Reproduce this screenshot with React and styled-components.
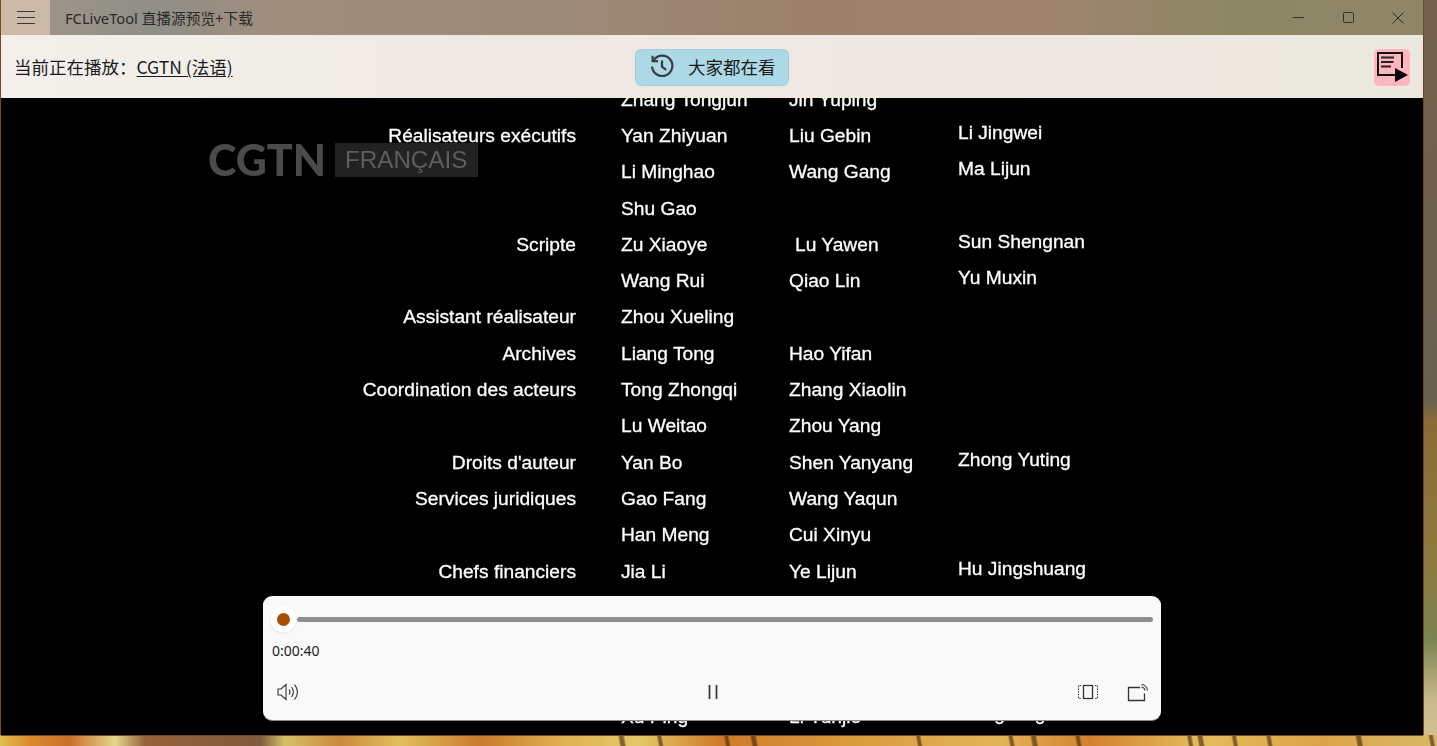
import * as React from 'react';
import styled, { createGlobalStyle } from 'styled-components';

const credits = [
    { names: ['Zhang Tongjun', 'Jin Yuping'] },
    { role: 'Réalisateurs exécutifs', names: ['Yan Zhiyuan', 'Liu Gebin', 'Li Jingwei'] },
    { names: ['Li Minghao', 'Wang Gang', 'Ma Lijun'] },
    { names: ['Shu Gao'] },
    { role: 'Scripte', names: ['Zu Xiaoye', 'Lu Yawen', 'Sun Shengnan'], indent: true },
    { names: ['Wang Rui', 'Qiao Lin', 'Yu Muxin'] },
    { role: 'Assistant réalisateur', names: ['Zhou Xueling'] },
    { role: 'Archives', names: ['Liang Tong', 'Hao Yifan'] },
    { role: 'Coordination des acteurs', names: ['Tong Zhongqi', 'Zhang Xiaolin'] },
    { names: ['Lu Weitao', 'Zhou Yang'] },
    { role: "Droits d'auteur", names: ['Yan Bo', 'Shen Yanyang', 'Zhong Yuting'] },
    { role: 'Services juridiques', names: ['Gao Fang', 'Wang Yaqun'] },
    { names: ['Han Meng', 'Cui Xinyu'] },
    { role: 'Chefs financiers', names: ['Jia Li', 'Ye Lijun', 'Hu Jingshuang'] },
    { names: [] },
    { names: [] },
    { names: [] },
    { names: ['Xu Ping', 'Li Yunjie', 'Geng Jing'] },
];

const HistoryIcon = () => (
    <svg width="26" height="26" viewBox="0 0 26 26" fill="none" stroke="#383d42" strokeWidth="2.2">
        <path d="M4.6 7.2A10.2 10.2 0 1 1 3 13.6" />
        <path d="M3.6 2.8v5.4h5.4" />
        <path d="M13 7.4v6.2l4.2 3.2" />
    </svg>
);

const PlaylistIcon = () => (
    <svg width="36" height="37" viewBox="0 0 36 37">
        <path d="M22 26H4V4h24v15" fill="none" stroke="#111" strokeWidth="2" />
        <path d="M7 8.5h13M7 13h12.500M7 17.500h10" fill="none" stroke="#222" strokeWidth="2" />
        <path d="M21 19l13 7-13 7z" fill="#000" />
    </svg>
);

const SpeakerIcon = () => (
    <svg width="22" height="20" viewBox="0 0 22 20" fill="none" stroke="#333" strokeWidth="1.1">
        <path d="M1 7h3l5-4.500v15L4 13H1z" />
        <path d="M12 7.500a4 4 0 0 1 0 5" />
        <path d="M14.500 5a7.500 7.500 0 0 1 0 10" />
        <path d="M17.500 2.500a11 11 0 0 1 0 15" />
    </svg>
);

const PauseIcon = () => (
    <svg width="12" height="16" viewBox="0 0 12 16" stroke="#333" strokeWidth="1.7">
        <path d="M2.500 1v14M9.500 1v14" />
    </svg>
);

const FitIcon = () => (
    <svg width="22" height="16" viewBox="0 0 22 16" fill="none" stroke="#333">
        <rect x="6.500" y="1.500" width="9" height="13" strokeWidth="1.300" />
        <path d="M4 1.500H1.500v13H4M18 1.500h2.500v13H18" strokeWidth="1" strokeDasharray="1.500 1.200" />
    </svg>
);

const CastIcon = () => (
    <svg width="22" height="19" viewBox="0 0 22 19" fill="none" stroke="#333">
        <path d="M13 4.500H1.500v13h16v-7" strokeWidth="1.300" />
        <path d="M14.500 4a4 4 0 0 1 3.500 3.500M14.500 1.500a6.500 6.500 0 0 1 6 6" strokeWidth="1.100" />
    </svg>
);

const App = () => {
    return (<Wallpaper>
        <GlobalStyle />
        <AppWindow>
            <TitleBar>
                <MenuButton><span /><span /><span /></MenuButton>
                <AppTitle>FCLiveTool 直播源预览+下载</AppTitle>
                <WindowButtons>
                    <WindowButton><MinimizeGlyph /></WindowButton>
                    <WindowButton><MaximizeGlyph /></WindowButton>
                    <WindowButton>
                        <svg width="12" height="12" viewBox="0 0 12 12" stroke="#2e2a22" strokeWidth="1">
                            <path d="M.5.5l11 11M11.500.5l-11 11" />
                        </svg>
                    </WindowButton>
                </WindowButtons>
            </TitleBar>
            <Header>
                <NowPlaying>当前正在播放：<ChannelLink>CGTN (法语)</ChannelLink></NowPlaying>
                <PopularButton><HistoryIcon />大家都在看</PopularButton>
                <PlaylistButton><PlaylistIcon /></PlaylistButton>
            </Header>
            <Video>
                <CreditList>
                    {credits.map((row, i) => (
                        <CreditRow key={i}>
                            <Role>{row.role}</Role>
                            <Name>{row.names[0]}</Name>
                            <Name $indent={row.indent}>{row.names[1]}</Name>
                            <Name $raised>{row.names[2]}</Name>
                        </CreditRow>
                    ))}
                </CreditList>
                <Watermark>
                    <WatermarkBrand>CGTN</WatermarkBrand>
                    <WatermarkTag>FRANÇAIS</WatermarkTag>
                </Watermark>
                <Player>
                    <SliderRow>
                        <Thumb />
                        <Track />
                    </SliderRow>
                    <Timer>0:00:40</Timer>
                    <Controls>
                        <ControlButton><SpeakerIcon /></ControlButton>
                        <ControlButton><PauseIcon /></ControlButton>
                        <RightControls>
                            <ControlButton><FitIcon /></ControlButton>
                            <ControlButton><CastIcon /></ControlButton>
                        </RightControls>
                    </Controls>
                </Player>
            </Video>
        </AppWindow>
    </Wallpaper>);
}

export default App;

const GlobalStyle = createGlobalStyle`
    html, body { margin: 0; padding: 0; height: 100%; overflow: hidden; }
    #root { height: 100%; }
`;

const twig = (x, w, c = 'rgba(70,38,12,.62)') => `transparent ${x - 2}px, ${c} ${x}px, ${c} ${x + w}px, transparent ${x + w + 2}px`;

const Wallpaper = styled.div`
    height: 746px;
    width: 1437px;
    overflow: hidden;
    background-color: #6a5c4a;
    background-image:
        linear-gradient(80deg, ${[612, 650, 716, 742, 905, 996, 1018, 1062, 1172, 1182, 1216, 1250, 1338, 1410].map((x, i) => twig(x, i % 3 === 0 ? 3 : 2)).join(', ')}, transparent 1437px),
        linear-gradient(90deg, #e0c050 0, #d98a2c 30px, #c9702a 70px, #e6d68c 115px, #96623a 145px, #7f5a3c 260px, #d6c06a 285px, #c98a3a 340px, #e2c060 400px, #c87a2c 480px, #e0b050 560px, #e4c868 640px, #cf7a28 720px, #d99a3c 850px, #e2b45a 1000px, #d2822c 1090px, #e4bc5c 1200px, #dca348 1320px, #d8b868 1437px),
        linear-gradient(180deg, #74614c 0, #69604f 400px, #8a6a35 420px, #8d7a3f 560px, #7b8450 640px, #cbb98c 700px, #d2c296 746px);
    background-size: 100% 11px, 100% 11px, 14px 100%;
    background-position: 0 100%, 0 100%, 100% 0;
    background-repeat: no-repeat;
`;

const AppWindow = styled.div`
    display: flex;
    flex-direction: column;
    width: 1422px;
    height: 735px;
    margin-left: 1px;
    box-shadow: -1px 0 0 #7a4a20, 1px 0 0 #6b4a2a, 0 1px 0 #6b4a2a;
`;

const TitleBar = styled.div`
    display: flex;
    align-items: center;
    flex: 0 0 35px;
    background: linear-gradient(90deg, #a39688 0, #8f8f88 150px, #9e8e7e 260px, #9c8a78 560px, #9c8068 830px, #a08470 1040px, #8d8664 1230px, #8f8668 1422px);
`;

const MenuButton = styled.div`
    display: flex;
    flex-direction: column;
    justify-content: center;
    align-items: center;
    gap: 4.500px;
    width: 49px;
    height: 35px;
    margin-right: 15px;
    background: #cdb9a8;
    span {
        display: block;
        width: 18px;
        height: 1.500px;
        background: #3c3a36;
    }
`;

const AppTitle = styled.div`
    font-family: "Noto Sans", "Noto Sans CJK SC", sans-serif;
    font-size: 14.700px;
    color: #2a2a28;
    white-space: nowrap;
`;

const WindowButtons = styled.div`
    display: flex;
    margin-left: auto;
`;

const WindowButton = styled.div`
    display: flex;
    align-items: center;
    justify-content: center;
    width: 50px;
    height: 30px;
`;

const MinimizeGlyph = styled.div`
    width: 11px;
    height: 1px;
    background: #3a352a;
`;

const MaximizeGlyph = styled.div`
    width: 9px;
    height: 9px;
    border: 1px solid #332f26;
    border-radius: 1.500px;
`;

const Header = styled.div`
    position: relative;
    display: flex;
    align-items: center;
    flex: 0 0 63px;
    padding: 0 13px 0 13px;
    box-sizing: border-box;
    background: linear-gradient(90deg, #f3f0ec 0, #efe9e3 500px, #f0e9e3 800px, #ebe8df 1422px);
    font-family: "Noto Sans CJK SC", "Noto Sans", sans-serif;
    font-size: 17.500px;
    color: #1a1a1a;
`;

const NowPlaying = styled.div`
    white-space: nowrap;
`;

const ChannelLink = styled.span`
    text-decoration: underline;
    text-underline-offset: 2px;
`;

const PopularButton = styled.div`
    position: absolute;
    left: 634px;
    top: 14px;
    display: flex;
    align-items: center;
    gap: 13px;
    width: 154px;
    height: 37px;
    box-sizing: border-box;
    padding: 0 0 3px 14px;
    border-radius: 6px;
    background: #add8e6;
    box-shadow: inset 0 0 0 1px rgba(0,0,0,.04);
`;

const PlaylistButton = styled.div`
    display: flex;
    width: 36px;
    height: 37px;
    margin: 2px 0 0 auto;
    border-radius: 5px;
    background: #ffb6c1;
`;

const Video = styled.div`
    position: relative;
    flex: 1;
    overflow: hidden;
    background: #000;
`;

const CreditList = styled.div`
    margin-top: -16.500px;
    filter: blur(.35px);
    font-family: "Liberation Sans", Arial, sans-serif;
    font-size: 19.200px;
    color: #fff;
    -webkit-text-stroke: .3px #fff;
`;

const CreditRow = styled.div`
    display: grid;
    grid-template-columns: 620px 168px 169px 1fr;
    align-items: center;
    height: 36.300px;
`;

const Role = styled.div`
    text-align: right;
    padding-right: 45px;
    white-space: nowrap;
`;

const Name = styled.div`
    white-space: nowrap;
    padding-left: ${props => props.$indent ? '6px' : '0'};
    margin-bottom: ${props => props.$raised ? '6px' : '0'};
`;

const Watermark = styled.div`
    position: absolute;
    left: 207px;
    top: 45px;
    display: flex;
    align-items: center;
    gap: 8px;
    filter: blur(.5px);
`;

const WatermarkBrand = styled.div`
    width: 119px;
    font-family: "Lato", "Noto Sans", sans-serif;
    font-weight: 900;
    font-size: 43px;
    line-height: 34px;
    color: #4b4b4b;
`;

const WatermarkTag = styled.div`
    width: 143px;
    height: 34px;
    box-sizing: border-box;
    padding-left: 10px;
    background: #222;
    font-family: "Liberation Sans", Arial, sans-serif;
    font-size: 24.200px;
    line-height: 34px;
    color: #5e5e5e;
    white-space: nowrap;
`;

const Player = styled.div`
    position: absolute;
    left: 262px;
    top: 498px;
    width: 898px;
    height: 124px;
    box-sizing: border-box;
    padding: 10px 3px 0 5px;
    border-radius: 9px;
    background: #f9f9f9;
    box-shadow: 0 1px 0 #8a8a8a;
`;

const SliderRow = styled.div`
    display: flex;
    align-items: center;
    height: 26px;
`;

const Thumb = styled.div`
    flex: none;
    width: 13px;
    height: 13px;
    margin: 0 7px 0 9px;
    border-radius: 50%;
    background: #a84f05;
    box-shadow: 0 0 0 6.500px #fff, 0 1px 0 7px rgba(0,0,0,.06);
`;

const Track = styled.div`
    flex: 1;
    height: 5px;
    margin-right: 5px;
    border-radius: 3px;
    background: #8e8e8e;
`;

const Timer = styled.div`
    margin: 9px 0 0 4px;
    font-family: "Noto Sans", sans-serif;
    font-size: 14px;
    line-height: 20px;
    color: #222;
`;

const Controls = styled.div`
    display: grid;
    grid-template-columns: 1fr auto 1fr;
    align-items: center;
    margin-top: 13px;
`;

const RightControls = styled.div`
    display: flex;
    justify-content: flex-end;
    gap: 10px;
`;

const ControlButton = styled.div`
    display: flex;
    align-items: center;
    justify-content: center;
    width: 40px;
    height: 36px;
`;
